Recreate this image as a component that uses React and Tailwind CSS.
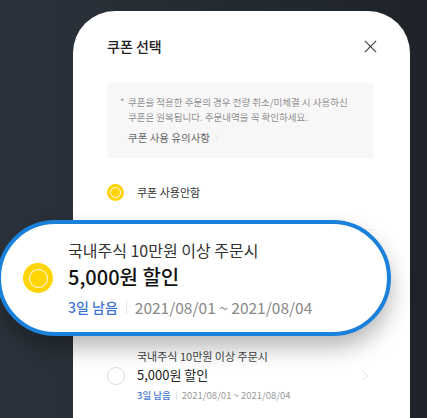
import React from 'react'

const font = { fontFamily: '"Noto Sans CJK KR", "Noto Sans", sans-serif' }

const YellowRadio = ({ size }) => {
  if (size === 'lg') {
    return (
      <div className="w-[30px] h-[30px] rounded-full bg-[#ffd400] flex items-center justify-center shrink-0">
        <div className="w-[19px] h-[19px] rounded-full border-[1.5px] border-white" />
      </div>
    )
  }
  return (
    <div className="w-[17px] h-[17px] rounded-full bg-[#ffd400] flex items-center justify-center shrink-0">
      <div className="w-[11px] h-[11px] rounded-full border border-white" />
    </div>
  )
}

const Chevron = ({ className }) => (
  <svg className={className} viewBox="0 0 8 14" fill="none" stroke="currentColor" strokeWidth="1">
    <path d="M1 1l6 6-6 6" />
  </svg>
)

const App = () => {
  return (
    <div
      className="relative w-[427px] h-[418px] overflow-hidden bg-gradient-to-r from-[#2b323b] to-[#1e2329]"
      style={font}
    >
      {/* Modal card */}
      <div className="ml-[73px] mt-[11px] w-[337px] h-[420px] bg-white rounded-t-[42px] pl-[34px] pr-[36px]">
        {/* Header */}
        <div className="flex items-center justify-between pt-[25px] h-[45px]">
          <h2 className="text-[14px] leading-[20px] font-medium text-[#222]">쿠폰 선택</h2>
          <svg className="w-[13px] h-[13px] text-[#444] mr-[-3px]" viewBox="0 0 14 14" fill="none" stroke="currentColor" strokeWidth="1.3">
            <path d="M1 1l12 12M13 1L1 13" />
          </svg>
        </div>

        {/* Notice box */}
        <div className="mt-[27px] bg-[#f7f7f7] rounded-[4px] pl-[13px] pr-[6px] pt-[12px] pb-[13px]">
          <div className="flex text-[9.5px] leading-[15px] text-[#8f8f8f] whitespace-nowrap">
            <span className="w-[8px] shrink-0">*</span>
            <p>
              쿠폰을 적용한 주문의 경우 전량 취소/미체결 시 사용하신
              <br />
              쿠폰은 원복됩니다. 주문내역을 꼭 확인하세요.
            </p>
          </div>
          <div className="flex items-center gap-[5px] pl-[8px] mt-[5px] text-[10.5px] leading-[15px] text-[#666]">
            <span>쿠폰 사용 유의사항</span>
            <Chevron className="w-[4px] h-[8px] text-[#c4c4c4]" />
          </div>
        </div>

        {/* No coupon option */}
        <div className="flex items-center gap-[13px] mt-[26px]">
          <YellowRadio />
          <span className="text-[11px] leading-[17px] text-[#333]">쿠폰 사용안함</span>
        </div>

        <div className="mt-[28px] border-t border-[#eee]" />

        {/* Space behind the zoomed item */}
        <div className="h-[117px]" />

        {/* Second coupon item */}
        <div className="flex items-center">
          <div className="w-[18px] h-[18px] rounded-full border border-[#ddd] shrink-0" />
          <div className="ml-[12px] flex-1">
            <p className="text-[11px] leading-[18px] text-[#444]">국내주식 10만원 이상 주문시</p>
            <p className="text-[13px] leading-[20px] text-[#222]">5,000원 할인</p>
            <p className="flex items-center text-[9.5px] leading-[18px] mt-[1px]">
              <span className="text-[#3f76d0] font-medium">3일 남음</span>
              <span className="mx-[5px] w-px h-[9px] bg-[#e3e3e3]" />
              <span className="text-[#999]">2021/08/01 ~ 2021/08/04</span>
            </p>
          </div>
          <Chevron className="w-[6px] h-[13px] text-[#d6d6d6] mr-[6px]" />
        </div>
      </div>

      {/* Highlighted coupon (zoomed overlay) */}
      <div className="absolute left-[-3px] top-[220px] w-[394px] h-[116px] rounded-full border-[4px] border-[#1b80d9] bg-white shadow-[0_12px_22px_rgba(0,0,0,0.28)] flex items-center pl-[22px]">
        <YellowRadio size="lg" />
        <div className="ml-[15px]">
          <p className="text-[16px] leading-[24px] text-[#333]">국내주식 10만원 이상 주문시</p>
          <p className="text-[20px] leading-[30px] font-medium text-[#111]">5,000원 할인</p>
          <p className="flex items-center text-[14px] leading-[22px] mt-[4px]">
            <span className="text-[#3f76d0] font-medium">3일 남음</span>
            <span className="mx-[8px] w-px h-[13px] bg-[#e3e3e3]" />
            <span className="text-[#888] text-[15.5px]">2021/08/01 ~ 2021/08/04</span>
          </p>
        </div>
      </div>
    </div>
  )
}

export default App
